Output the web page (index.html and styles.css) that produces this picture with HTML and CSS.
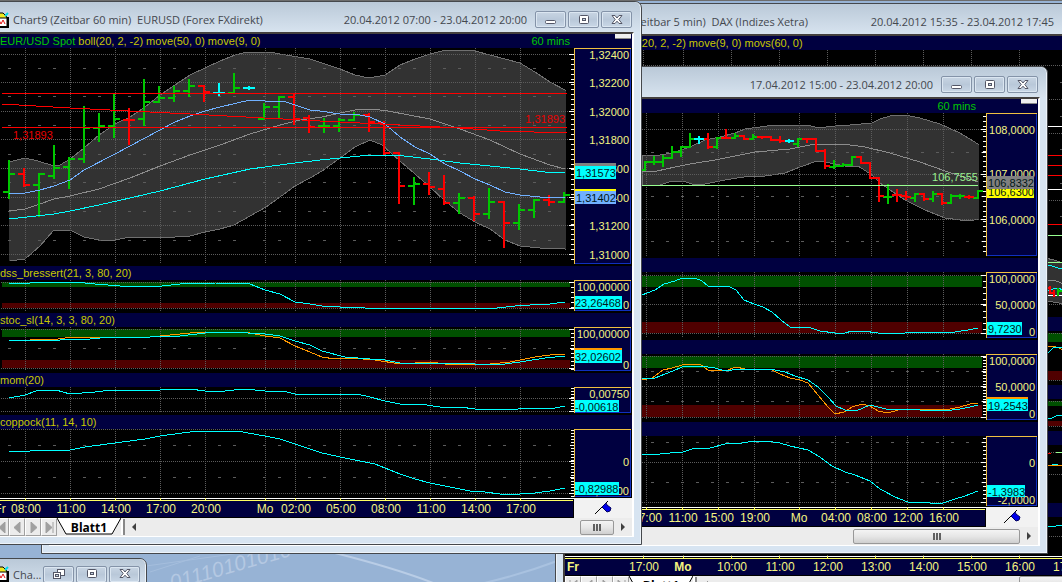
FILE: index.html
```html
<!DOCTYPE html>
<html lang="de">
<head>
    <meta charset="UTF-8">
    <meta name="viewport" content="width=device-width, initial-scale=1.0">
    <title>Charts</title>
    <link rel="stylesheet" href="styles.css">
</head>
<body>
    <!-- shared icons -->
    <svg class="defs" width="0" height="0">
        <symbol id="ico-min" viewBox="0 0 14 12"><rect x="1.5" y="6.5" width="10" height="3" rx="1" fill="#fff" stroke="#535666"/></symbol>
        <symbol id="ico-max" viewBox="0 0 14 12"><rect x="2.5" y="1.5" width="9" height="8" rx="1" fill="#fff" stroke="#535666"/><rect x="5.5" y="4.5" width="3" height="2" fill="#c5d3e2" stroke="#535666"/></symbol>
        <symbol id="ico-restore" viewBox="0 0 14 12"><rect x="5.5" y="1.5" width="7" height="6" fill="#fff" stroke="#535666"/><rect x="1.5" y="4.5" width="7" height="6" fill="#fff" stroke="#535666"/><rect x="3.5" y="6.5" width="3" height="2" fill="#c5d3e2" stroke="#535666"/></symbol>
        <symbol id="ico-close" viewBox="0 0 14 12"><path d="M2 1.500H5L7 4L9 1.500H12L8.800 5.500L12 9.500H9L7 7.200L5 9.500H2L5.200 5.500Z" fill="#fff" stroke="#535666"/></symbol>
        <symbol id="ico-pin" viewBox="0 0 20 16"><path d="M2 14L15 1" stroke="#000" fill="none"/><path d="M9 7L13 3L14 5L18 8L17 11L14 12L12 10Z" fill="#0000e8" stroke="#000060"/></symbol>
        <symbol id="ico-app" viewBox="0 0 16 16"><path d="M1 5H14V15H1Z" fill="#fff" stroke="#000"/><path d="M2 1H10L13 4L14 6H4Z" fill="#f0e820" stroke="#000"/><path d="M12 4L15 1" stroke="#00d8e8" stroke-width="2"/><path d="M3 11L6 8L8 12L10 8L12 12" stroke="#e01010" fill="none"/><path d="M1 15H15V5" stroke="#000" fill="none" stroke-width="2"/></symbol>
    </svg>

    <main class="desktop">
        <svg class="wallpaper" viewBox="0 545 640 37" width="640" height="37">
            <path d="M335 553Q410 572 450 590" stroke="#b9cde6" stroke-width="2" fill="none"/>
            <path d="M480 584Q520 575 560 560" stroke="#a9c2e0" stroke-width="2" fill="none"/>
            <path d="M146 566L240 553M150 572L200 556" stroke="#a5bedd" fill="none"/>
            <text x="172" y="590" transform="rotate(-16 172 590)">01110101010</text>
        </svg>

        <!-- DAX, 5 min -->
        <section class="window win-dax">
            <header class="titlebar">
                <h2 class="title">(Zeitbar 5 min)&nbsp; DAX (Indizes Xetra)</h2>
                <span class="range">20.04.2012 15:35 - 23.04.2012 17:45</span>
                <button class="ctl" aria-label="Minimieren"><svg width="14" height="12"><use href="#ico-min"/></svg></button>
                <button class="ctl" aria-label="Maximieren"><svg width="14" height="12"><use href="#ico-max"/></svg></button>
                <button class="ctl" aria-label="Schließen"><svg width="14" height="12"><use href="#ico-close"/></svg></button>
            </header>
            <div class="content">
                <div class="pane-head">boll(20, 2, -2) move(9, 0) movs(60, 0)</div>
                <svg class="plot" viewBox="565 50 600 267" width="600" height="267">
                    <path class="band" d="M1040 258Q1052 258 1064 264V304Q1050 301 1040 301Z"/>
                    <path class="grid" d="M643 50V317M683 50V317M731 50V317M779 50V317M827 50V317M875 50V317M923 50V317M971 50V317M1019 50V317M565 65H1165M565 99H1165M565 133H1165M565 200H1165M565 304H1165"/>
                    <path class="minor" d="M1060 82H1165M1060 116H1165M1060 149H1165M1060 183H1165M1060 216H1165"/>
                    <path class="white" d="M565 126H1165M565 189H1165M565 295H1165"/>
                    <path class="red" d="M565 155H1165M565 165H1165M565 175H1165M565 224H1165"/>
                    <path class="lime" d="M565 235H1165M565 262H1165"/>
                    <path class="cyan" d="M1040 265L1052 266L1058 268L1070 269M1048 291L1056 288L1065 290"/>
                    <path class="gray" d="M1048 280L1056 281L1064 284"/>
                    <path class="bar dn" d="M1048 288H1050V286V293H1054V297V290"/>
                    <path class="bar up" d="M1058 288V296V291H1064"/>
                </svg>
                <div class="pane-head"></div>
                <svg class="plot" viewBox="565 331 600 54" width="600" height="54">
                    <rect class="zone-hi" x="565" y="333" width="600" height="9"/>
                    <rect class="zone-lo" x="565" y="371" width="600" height="9"/>
                    <path class="grid" d="M565 333H1165M565 380H1165"/>
                    <path class="orange" d="M1040 350L1050 346L1056 347L1064 350"/>
                    <path class="cyan" d="M1040 358L1049 352L1053 348L1064 347"/>
                </svg>
                <div class="pane-head"></div>
                <svg class="plot" viewBox="565 399 600 32" width="600" height="32">
                    <rect class="zone-hi" x="565" y="401" width="600" height="5"/>
                    <rect class="zone-lo" x="565" y="421" width="600" height="5"/>
                    <path class="grid" d="M565 401H1165M565 426H1165"/>
                    <path class="cyan" d="M1040 420L1052 418L1056 416L1064 415"/>
                </svg>
                <div class="pane-head"></div>
                <svg class="plot" viewBox="565 445 600 58" width="600" height="58">
                    <path class="grid" d="M565 452H1165M565 474H1165"/>
                    <path class="red" d="M1046 453H1051"/>
                    <path class="lime" d="M1056 452H1065"/>
                    <path class="orange" d="M1040 465H1070"/>
                    <path class="cyan" d="M1052 464L1058 465"/>
                </svg>
                <div class="pane-head"></div>
                <svg class="plot" viewBox="565 517 600 39" width="600" height="39">
                    <path class="grid" d="M565 536H1165M643 545V556M683 545V556M731 545V556M779 545V556M827 545V556M875 545V556M923 545V556M971 545V556M1019 545V556"/>
                    <path class="cyan" d="M1040 526H1056L1070 525"/>
                </svg>
                <svg class="time" viewBox="565 556 600 20" width="600" height="20">
                    <path class="time-top" d="M565 556.500H1165"/>
                    <rect class="time-bg" x="565" y="559" width="600" height="16"/>
                    <path class="time-line" d="M565 558.500H1165M643.500 556V559M683.500 556V559M731.500 556V559M779.500 556V559M827.500 556V559M875.500 556V559M923.500 556V559M971.500 556V559M1019.500 556V559"/>
                    <g text-anchor="middle">
                        <text class="day" x="573" y="571">Fr</text><text x="644" y="571">17:00</text><text class="day" x="683" y="571">Mo</text><text x="732" y="571">10:00</text><text x="780" y="571">11:00</text><text x="828" y="571">12:00</text><text x="876" y="571">13:00</text><text x="924" y="571">14:00</text><text x="972" y="571">15:00</text><text x="1020" y="571">16:00</text><text x="1068" y="571">17:00</text>
                    </g>
                </svg>
                <div class="tabbar">
                    <div class="nav-buttons">
                        <button aria-label="Erstes Blatt"><svg width="9" height="11"><path d="M1 0V11M8 0L2 5.500L8 11Z"/></svg></button>
                        <button aria-label="Voriges Blatt"><svg width="9" height="11"><path d="M7 0L1 5.500L7 11Z"/></svg></button>
                        <button aria-label="Nächstes Blatt"><svg width="9" height="11"><path d="M2 0L8 5.500L2 11Z"/></svg></button>
                        <button aria-label="Letztes Blatt"><svg width="9" height="11"><path d="M1 0L7 5.500L1 11ZM8 0V11"/></svg></button>
                    </div>
                    <button class="tab"><svg class="tab-shape" viewBox="0 0 64 17" preserveAspectRatio="none"><path d="M0 0L9 16H55L64 0"/></svg><span>Blatt1</span></button>
                    <div class="scroll"><span class="grip"></span><button class="arrow left" aria-label="Links"></button></div>
                    <button class="thumb dax-thumb" aria-label="Bildlauf"></button>
                </div>
            </div>
        </section>

        <!-- second 60 min chart -->
        <section class="window win-yen">
            <header class="titlebar">
                <span class="range">17.04.2012 15:00 - 23.04.2012 20:00</span>
                <button class="ctl" aria-label="Minimieren"><svg width="14" height="12"><use href="#ico-min"/></svg></button>
                <button class="ctl" aria-label="Maximieren"><svg width="14" height="12"><use href="#ico-max"/></svg></button>
                <button class="ctl" aria-label="Schließen"><svg width="14" height="12"><use href="#ico-close"/></svg></button>
            </header>
            <div class="content">
                <div class="pane-head"><span class="mins">60 mins</span><span class="handle"></span></div>
                <div class="pane-body">
                    <svg class="plot" viewBox="49 113 937 143" width="937" height="143">
                        <path class="band" d="M642 155H660L672 153L690 147L705 140L720 137L735 133L745 129L760 127L775 125H808L818 128L835 126L850 125L872 123L880 119L890 116L905 115L920 118L940 124L960 133L978 144V219L970 221L960 220L945 218L925 210L905 200L890 190L880 183L872 175L858 166H845L830 163L817 161L800 167L785 173L765 176H750L725 180L705 184H692L683 181H672L660 185H642Z"/>
                        <path class="band-end" d="M978 145V219"/>
                        <path class="grid" d="M646 113V256M682 113V256M718 113V256M754 113V256M799 113V256M835 113V256M871 113V256M907 113V256M943 113V256M642 129H982M642 174H982M642 219H982"/>
                        <path class="minor even" d="M651 152H982M651 196H982M651 241H982"/>
                        <path class="gray" d="M642 171H657L675 167L690 164L715 160L755 152L790 149L810 145L825 144L850 145L865 147L890 153L920 162L945 171L978 182"/>
                        <path class="bar up" d="M642 170H645V162H654V156V165V162H663V155V167V158H672V146V158V152H681V157V146V147H690V133V148V139H695M712 147H717V149V137V138H722M730 138H735V133V138V136H740M748 139H753V134V140V137H758M793 144H798V147V138V139H803M829 167H834V160V169V166H843V163V167V165H852V156V157H857M883 197H888V184V204V197H892M910 198H915V202V194H920M928 199H933V202V191V194H937M946 203H951V204V194V196H960V194V199V196H965M973 198H978V199V190V191H983"/>
                        <path class="bar dn" d="M704 139H708V133V149V147H713M721 138H726V129V139V138H731M739 136H744V135V140V139H749M757 137H762V136V139V137H771V136V141V140H780V136V143V141H785M802 139H807V138V143V139H816V152V151H825V149V169V166H830M856 157H861V164V163H870V162V179V178H879V177V202V196H884M892 195H897V189V202V195H902M901 196H906V191V200V197H911M919 194H924V193V201V199H929M937 194H942V205V203H947M964 197H969V195V199V197H974"/>
                        <path class="bar eq" d="M694 139H704M699 136V144M785 141H794M789 139V143"/>
                        <path class="lime" d="M642 185H978"/>
                        <text class="t-lime" x="978" y="181" text-anchor="end">106,7555</text>
                        <path class="tick" d="M981 129H986M981 174H986M981 219H986M982 152H986M982 196H986M982 241H986"/>
                        <path class="ruler five" d="M984.500 116V256"/>
                    </svg>
                    <svg class="axis" viewBox="986 113 51 143" width="51" height="143">
                        <g text-anchor="end"><text x="1035" y="134">108,0000</text><text x="1035" y="178">107,0000</text><text x="1035" y="224">106,0000</text></g>
                        <rect class="b-yellow" x="987" y="186" width="47" height="12"/><text class="dark" x="1034" y="196" text-anchor="end">106,6300</text>
                        <rect class="b-gray" x="987" y="176" width="47" height="13"/><text class="dark" x="1034" y="187" text-anchor="end">106,8332</text>
                    </svg>
                </div>
                <div class="pane-head"></div>
                <div class="pane-body">
                    <svg class="plot" viewBox="49 272 937 66" width="937" height="66">
                        <rect class="zone-hi" x="51" y="276" width="931" height="11"/>
                        <rect class="zone-lo" x="51" y="322" width="931" height="11"/>
                        <path class="grid" d="M646 272V338M682 272V338M718 272V338M754 272V338M799 272V338M835 272V338M871 272V338M907 272V338M943 272V338M642 275H982M642 304H982M642 333H982"/>
                        <path class="cyan" d="M642 295L655 290L664 284L675 281L682 278H695L702 281L708 286H728L736 290L744 300L754 304L763 307L772 312L781 320L790 327H808L820 331L835 333H845L852 331H863L878 333H905L920 332L945 333L955 332L968 330L978 328"/>
                        <path class="tick" d="M981 275H986M981 304H986M981 333H986"/>
                        <path class="ruler six" d="M984.500 275V334"/>
                    </svg>
                    <svg class="axis" viewBox="986 272 51 66" width="51" height="66">
                        <g text-anchor="end"><text x="1035" y="283">100,0000</text><text x="1035" y="309">50,0000</text><text x="1035" y="336">0</text></g>
                        <rect class="b-cyan" x="987" y="322" width="35" height="13"/><text class="dark" x="988" y="333">9,7230</text>
                    </svg>
                </div>
                <div class="pane-head"></div>
                <div class="pane-body">
                    <svg class="plot" viewBox="49 354 937 66" width="937" height="66">
                        <rect class="zone-hi" x="51" y="356" width="931" height="12"/>
                        <rect class="zone-lo" x="51" y="405" width="931" height="12"/>
                        <path class="grid" d="M646 354V420M682 354V420M718 354V420M754 354V420M799 354V420M835 354V420M871 354V420M907 354V420M943 354V420M642 356H982M642 386H982M642 417H982"/>
                        <path class="minor even" d="M651 371H982M651 401H982"/>
                        <path class="orange" d="M642 380L652 378L663 370L672 368L682 365L700 364L708 370L725 371L736 367L745 369L772 370L780 374L790 378L800 380L808 383L818 395L828 407L835 414L844 412L852 407L862 404L870 406L878 411L888 413L898 410L925 409L945 410L960 407L970 404L978 403"/>
                        <path class="cyan" d="M642 378H655L665 374L673 371L682 367L700 366L715 368L725 371L740 369H770L785 372L795 376L808 380L818 387L828 397L836 406L845 410L856 411L863 408L870 405L878 407L890 410L910 409L920 410L945 411L960 409L970 407L978 405"/>
                        <path class="tick" d="M981 356H986M981 386H986M981 417H986M982 371H986M982 401H986"/>
                        <path class="ruler three" d="M984.500 357V418"/>
                    </svg>
                    <svg class="axis" viewBox="986 354 51 66" width="51" height="66">
                        <g text-anchor="end"><text x="1035" y="365">100,0000</text><text x="1035" y="391">50,0000</text><text x="1035" y="418">0</text></g>
                        <rect class="b-orange" x="987" y="397" width="41" height="3"/>
                        <rect class="b-cyan" x="987" y="399" width="41" height="12"/><text class="dark" x="988" y="410">19,2543</text>
                    </svg>
                </div>
                <div class="pane-head"></div>
                <div class="pane-body last">
                    <svg class="plot" viewBox="49 436 937 70" width="937" height="70">
                        <path class="grid" d="M646 436V506M682 436V506M718 436V506M754 436V506M799 436V506M835 436V506M871 436V506M907 436V506M943 436V506M642 462H982M642 502H982"/>
                        <path class="minor even" d="M651 442H982M651 482H982"/>
                        <path class="cyan" d="M642 454H660L670 453L683 452L695 448H710L725 444L742 443L755 441H765L780 443L790 446L808 450L820 457L832 466L845 472L855 475L870 481L880 489L895 497L908 502L930 503H943L955 499L965 496L978 491"/>
                        <path class="tick" d="M981 462H986M981 502H986M982 442H986M982 482H986"/>
                        <path class="ruler four" d="M984.500 438V506"/>
                    </svg>
                    <svg class="axis" viewBox="986 436 51 70" width="51" height="70">
                        <g text-anchor="end"><text x="1035" y="467">0</text><text x="1035" y="504">-2,0000</text></g>
                        <rect class="b-cyan" x="987" y="485" width="38" height="12"/><text class="dark" x="988" y="496">-1,3983</text>
                    </svg>
                </div>
                <div class="time-row">
                    <svg class="time" viewBox="49 507 937 20" width="937" height="20">
                        <path class="time-top" d="M49 507.500H986"/>
                        <rect class="time-bg" x="49" y="510" width="936" height="16"/>
                        <path class="time-line" d="M49 509.500H985M646.500 507V510M682.500 507V510M718.500 507V510M754.500 507V510M799.500 507V510M835.500 507V510M871.500 507V510M907.500 507V510M943.500 507V510"/>
                        <g text-anchor="middle">
                            <text x="647" y="522">07:00</text><text x="683" y="522">11:00</text><text x="719" y="522">15:00</text><text x="755" y="522">19:00</text><text x="799" y="522">Mo</text><text x="836" y="522">04:00</text><text x="872" y="522">08:00</text><text x="908" y="522">12:00</text><text x="944" y="522">16:00</text>
                        </g>
                    </svg>
                    <div class="pin"><svg width="20" height="16"><use href="#ico-pin"/></svg></div>
                </div>
                <div class="tabbar">
                    <div class="scroll end"><button class="thumb wide" aria-label="Bildlauf"><i></i></button><button class="arrow right" aria-label="Rechts"></button></div>
                </div>
            </div>
        </section>

        <!-- EURUSD, 60 min -->
        <section class="window win-eur">
            <header class="titlebar">
                <svg class="app-icon" width="16" height="16"><use href="#ico-app"/></svg>
                <h2 class="title">Chart9 (Zeitbar 60 min)&nbsp; EURUSD (Forex FXdirekt)</h2>
                <span class="range">20.04.2012 07:00 - 23.04.2012 20:00</span>
                <button class="ctl" aria-label="Minimieren"><svg width="14" height="12"><use href="#ico-min"/></svg></button>
                <button class="ctl" aria-label="Maximieren"><svg width="14" height="12"><use href="#ico-max"/></svg></button>
                <button class="ctl" aria-label="Schließen"><svg width="14" height="12"><use href="#ico-close"/></svg></button>
            </header>
            <div class="content">
                <div class="pane-head"><span><b>EUR/USD Spot</b> boll(20, 2, -2) move(50, 0) move(9, 0)</span><span class="mins">60 mins</span><span class="handle"></span></div>
                <div class="pane-body">
                    <svg class="plot" viewBox="0 48 574 216" width="574" height="216">
                        <path class="band" d="M9 162L17 160L25 158L38 161L54 166L60 165L70 159L84 148L99 135L115 124L130 117L145 107L160 95L175 85L190 75L205 68L220 61L235 55L247 52H270L280 54L292 56L310 59L322 63L340 69L355 75L369 78L385 75L400 65L415 59L430 54L442 51L462 50L475 51L490 55L505 59L520 63L535 72L550 82L565 90V249L540 248L520 246L505 240L490 229L475 222L460 213L445 201L430 187L415 174L400 161L382 145L370 140L355 147L340 158L322 171L310 178L295 186L280 197L266 207L250 216L234 225L220 229L205 232L190 236L175 237H160L145 238L130 237L115 240H99L84 237L70 230H54L40 246L25 259L9 261Z"/>
                        <path class="band-end" d="M9 163V261M565 91V249"/>
                        <path class="grid" d="M25 48V264M70 48V264M115 48V264M160 48V264M205 48V264M265 48V264M295 48V264M340 48V264M385 48V264M430 48V264M475 48V264M520 48V264M1 54H570M1 82H570M1 111H570M1 139H570M1 168H570M1 197H570M1 225H570M1 254H570"/>
                        <path class="minor" d="M-7 68H570M-7 96H570M-7 125H570M-7 154H570M-7 182H570M-7 211H570M-7 240H570"/>
                        <path class="gray" d="M9 211L25 209L40 204L54 199L70 196L99 189L130 178L160 166L190 155L220 145L250 134L280 125L300 120L322 117L340 113L355 110L372 109L388 111L430 119L460 129L490 140L520 154L550 165L565 169"/>
                        <path class="bar up" d="M3 192H9V199V160V174H15M33 185H39V217V174H45M48 176H54V179V145V168H60M63 167H69V189V157V159H75M78 159H84V163V106V128H90M93 128H99V142V113V126H105M108 126H114V138V94V119H120M138 119H144V126V79V102H150M153 102H159V103V86V98H165M168 98H174V102V86V91H180M183 91H189V97V79V86H195M228 93H234V73V88H240M258 119H264V120V103V107H270M273 107H279V118V96V97H285M318 126H324V133V118V126H330M333 126H339V132V118V120H345M348 120H354V121V112V115H360M408 186H414V205V177V184H420M453 203H459V214V193V198H465M483 214H489V219V188V202H495M513 223H519V230V204V210H525M528 210H534V218V199V200H540M558 202H564V203V192V195H570"/>
                        <path class="bar dn" d="M18 174H24V168V187V185H30M123 120H129V108V145V120H135M198 86H204V102V92H210M288 97H294V93V125V119H300M303 118H309V115V133V127H315M363 115H369V113V132V122H375M378 123H384V121V155V153H390M393 153H399V204V186H405M423 184H429V172V195V187H435M438 189H444V175V205V203H450M468 198H474V196V221V214H480M498 202H504V248V223H510M543 200H549V195V206V202H555"/>
                        <path class="bar eq" d="M213 93H225M219 83V96M243 88H255M249 86V90"/>
                        <path class="cyan" d="M9 219L54 214L70 211L99 205L130 198L160 191L205 179L250 169L295 163L320 160L350 157L370 155H395L430 159L460 163L490 166L520 169L545 172H565"/>
                        <path class="blue" d="M9 194L25 193L40 190L54 186L70 180L84 170L115 154L145 138L175 122L190 116L205 111L220 107L250 100L265 101H283L295 105L310 110L320 111L340 114L360 115L370 117L385 124L400 137L415 147L430 154L445 164L460 171L475 179L490 185L505 192L520 195L540 197H565"/>
                        <path class="red" d="M2 93H567M2 127H567M2 104L70 108L130 111L190 114L320 121L400 125L460 128L500 131L567 133"/>
                        <text class="t-red" x="13" y="139">1,31893</text>
                        <text class="t-red" x="565" y="123" text-anchor="end">1,31893</text>
                        <path class="tick" d="M569 54H574M569 82H574M569 111H574M569 139H574M569 168H574M569 197H574M569 225H574M569 254H574"/>
                        <path class="ruler five" d="M572.500 54V262"/>
                    </svg>
                    <svg class="axis" viewBox="574 48 57 216" width="57" height="216">
                        <g text-anchor="end"><text x="629" y="59">1,32400</text><text x="629" y="87">1,32200</text><text x="629" y="116">1,32000</text><text x="629" y="144">1,31800</text><text x="629" y="173">1,31600</text><text x="629" y="202">1,31400</text><text x="629" y="230">1,31200</text><text x="629" y="259">1,31000</text></g>
                        <rect class="b-gray" x="575" y="163" width="41" height="3"/>
                        <rect class="b-cyan" x="575" y="166" width="41" height="13"/><text class="dark" x="576" y="177">1,31573</text>
                        <rect class="b-yellow" x="575" y="189" width="41" height="2"/>
                        <rect class="b-blue" x="575" y="191" width="41" height="13"/><text class="dark" x="576" y="202">1,31402</text>
                    </svg>
                </div>
                <div class="pane-head">dss_bressert(21, 3, 80, 20)</div>
                <div class="pane-body">
                    <svg class="plot" viewBox="0 280 574 31" width="574" height="31">
                        <rect class="zone-hi" x="2" y="282" width="568" height="5"/>
                        <rect class="zone-lo" x="2" y="303" width="568" height="5"/>
                        <path class="grid" d="M25 280V311M70 280V311M115 280V311M160 280V311M205 280V311M265 280V311M295 280V311M340 280V311M385 280V311M430 280V311M475 280V311M520 280V311M1 282H570M1 308H570"/>
                        <path class="cyan" d="M9 283H30L40 282H75L95 284L120 286H162L180 284L190 283H215L250 284L265 290L280 294L295 302L310 304L322 306L340 307L365 308H497L515 306L530 305L550 304L565 302"/>
                        <path class="tick" d="M569 282H574M569 308H574"/>
                        <path class="ruler five" d="M572.500 282V310"/>
                    </svg>
                    <svg class="axis" viewBox="574 280 57 31" width="57" height="31">
                        <g text-anchor="end"><text x="629" y="291">100,00000</text><text x="629" y="309">0</text></g>
                        <rect class="b-cyan" x="575" y="296" width="47" height="13"/><text class="dark" x="575" y="307">23,26468</text>
                    </svg>
                </div>
                <div class="pane-head">stoc_sl(14, 3, 3, 80, 20)</div>
                <div class="pane-body">
                    <svg class="plot" viewBox="0 327 574 44" width="574" height="44">
                        <rect class="zone-hi" x="2" y="329" width="568" height="8"/>
                        <rect class="zone-lo" x="2" y="360" width="568" height="8"/>
                        <path class="grid" d="M25 327V371M70 327V371M115 327V371M160 327V371M205 327V371M265 327V371M295 327V371M340 327V371M385 327V371M430 327V371M475 327V371M520 327V371M1 329H570M1 368H570"/>
                        <path class="minor" d="M-7 348H570"/>
                        <path class="orange" d="M30 339H58L65 338L105 337H150L160 336L180 334L200 332H215L250 333L265 336L280 338L295 346L310 352L322 357L335 359L350 358L375 360L400 364L430 362L445 364L480 365L510 362L535 357L550 355L565 354"/>
                        <path class="cyan" d="M9 340H60L90 339L110 337H150L180 336L205 333L230 332L265 334L280 336L295 341L310 345L322 351L345 357L370 359L385 360L400 363H465L475 364H505L520 362L545 358L565 356"/>
                        <path class="tick" d="M569 329H574M569 368H574M570 348H574"/>
                        <path class="ruler four" d="M572.500 329V370"/>
                    </svg>
                    <svg class="axis" viewBox="574 327 57 44" width="57" height="44">
                        <g text-anchor="end"><text x="629" y="338">100,00000</text><text x="629" y="369">0</text></g>
                        <rect class="b-orange" x="575" y="348" width="47" height="2"/>
                        <rect class="b-cyan" x="575" y="350" width="47" height="13"/><text class="dark" x="575" y="361">32,02602</text>
                    </svg>
                </div>
                <div class="pane-head">mom(20)</div>
                <div class="pane-body">
                    <svg class="plot" viewBox="0 387 574 26" width="574" height="26">
                        <path class="grid" d="M25 387V413M70 387V413M115 387V413M160 387V413M205 387V413M265 387V413M295 387V413M340 387V413M385 387V413M430 387V413M475 387V413M520 387V413M1 398H570M1 411H570"/>
                        <path class="cyan" d="M9 398L25 395L36 391L45 390H56L70 394L95 392L112 390H160L175 389H190L205 391H225L243 389L255 390L265 391H283L295 394L305 395L322 394H357L370 397L385 401L400 404H420L440 407H460L475 409H490L507 410L530 408L550 409L565 406"/>
                        <path class="tick" d="M569 398H574M569 411H574"/>
                        <path class="ruler three" d="M572.500 388V412"/>
                    </svg>
                    <svg class="axis" viewBox="574 387 57 26" width="57" height="26">
                        <text x="629" y="398" text-anchor="end">0,00750</text>
                        <rect class="b-cyan" x="575" y="400" width="44" height="12"/><text class="dark" x="575" y="411">-0,00618</text>
                    </svg>
                </div>
                <div class="pane-head">coppock(11, 14, 10)</div>
                <div class="pane-body last">
                    <svg class="plot" viewBox="0 429 574 68" width="574" height="68">
                        <path class="grid" d="M25 429V497M70 429V497M115 429V497M160 429V497M205 429V497M265 429V497M295 429V497M340 429V497M385 429V497M430 429V497M475 429V497M520 429V497M1 429H570M1 461H570M1 493H570"/>
                        <path class="minor" d="M-7 445H570M-7 477H570"/>
                        <path class="cyan" d="M9 451H30L40 450H70L85 447L115 443L145 439L160 436L190 432L203 431H237L265 436L280 439L295 444L322 453L345 458L375 464L385 468L400 474L415 479L430 483L450 487L470 491L485 492L500 494H520L535 493L550 491L565 488"/>
                        <path class="tick" d="M569 461H574M569 493H574M570 445H574M570 477H574"/>
                        <path class="ruler three" d="M572.500 430V497"/>
                    </svg>
                    <svg class="axis" viewBox="574 429 57 68" width="57" height="68">
                        <g text-anchor="end"><text x="629" y="466">0</text><text x="629" y="495">-1,00000</text></g>
                        <rect class="b-cyan" x="575" y="482" width="44" height="13"/><text class="dark" x="575" y="493">-0,82988</text>
                    </svg>
                </div>
                <div class="time-row">
                    <svg class="time" viewBox="0 498 574 20" width="574" height="20">
                        <path class="time-top" d="M0 498.500H574"/>
                        <rect class="time-bg" x="0" y="501" width="573" height="16"/>
                        <path class="time-line" d="M0 500.500H573M25.500 498V501M70.500 498V501M115.500 498V501M160.500 498V501M205.500 498V501M265.500 498V501M295.500 498V501M340.500 498V501M385.500 498V501M430.500 498V501M475.500 498V501M520.500 498V501"/>
                        <g text-anchor="middle">
                            <text x="0" y="513">Fr</text><text x="26" y="513">08:00</text><text x="71" y="513">11:00</text><text x="116" y="513">14:00</text><text x="161" y="513">17:00</text><text x="206" y="513">20:00</text><text x="265" y="513">Mo</text><text x="296" y="513">02:00</text><text x="341" y="513">05:00</text><text x="386" y="513">08:00</text><text x="431" y="513">11:00</text><text x="476" y="513">14:00</text><text x="521" y="513">17:00</text>
                        </g>
                    </svg>
                    <div class="pin"><svg width="20" height="16"><use href="#ico-pin"/></svg></div>
                </div>
                <div class="tabbar">
                    <div class="nav-buttons cut">
                        <button aria-label="Erstes Blatt"><svg width="9" height="11"><path d="M1 0V11M8 0L2 5.500L8 11Z"/></svg></button>
                        <button aria-label="Voriges Blatt"><svg width="9" height="11"><path d="M7 0L1 5.500L7 11Z"/></svg></button>
                        <button aria-label="Nächstes Blatt"><svg width="9" height="11"><path d="M2 0L8 5.500L2 11Z"/></svg></button>
                        <button aria-label="Letztes Blatt"><svg width="9" height="11"><path d="M1 0L7 5.500L1 11ZM8 0V11"/></svg></button>
                    </div>
                    <button class="tab"><svg class="tab-shape" viewBox="0 0 64 17" preserveAspectRatio="none"><path d="M0 0L9 16H55L64 0"/></svg><span>Blatt1</span></button>
                    <div class="scroll"><span class="grip"></span><button class="arrow left" aria-label="Links"></button><span class="fill"></span><button class="thumb" aria-label="Bildlauf"><i></i></button><button class="arrow right" aria-label="Rechts"></button></div>
                </div>
            </div>
        </section>

        <!-- minimised chart -->
        <section class="window win-min">
            <header class="titlebar">
                <svg class="app-icon" width="16" height="16"><use href="#ico-app"/></svg>
                <h2 class="title">Cha...</h2>
                <button class="ctl" aria-label="Wiederherstellen"><svg width="14" height="12"><use href="#ico-restore"/></svg></button>
                <button class="ctl" aria-label="Maximieren"><svg width="14" height="12"><use href="#ico-max"/></svg></button>
                <button class="ctl" aria-label="Schließen"><svg width="14" height="12"><use href="#ico-close"/></svg></button>
            </header>
        </section>
    </main>
</body>
</html>
```
FILE: styles.css
```css
* {
    box-sizing: border-box;
}

body {
    margin: 0;
    font-family: 'Liberation Sans', sans-serif;
    font-size: 11px;
}

svg {
    display: block;
    flex-shrink: 0;
}

button {
    padding: 0;
    margin: 0;
    border: none;
    background: none;
    font: inherit;
}

.defs {
    position: absolute;
}

.desktop {
    position: relative;
    height: 100vh;
    overflow: hidden;
    background: #97b3d5;
    border-top: 1px solid #6d6d6d;
}

.wallpaper {
    position: absolute;
    left: 0;
    bottom: 0;
}

.wallpaper text {
    font: italic 21px 'Liberation Sans', sans-serif;
    fill: #b4c8e2;
}

/* windows */
.window {
    position: absolute;
    padding: 0 7px 7px;
    border: 1px solid #45484c;
    border-radius: 7px 7px 0 0;
    background: #d7e4f1;
    box-shadow: inset 0 0 0 1px #edf3f9;
}

.win-dax {
    left: 555px;
    right: -107px;
    top: 2px;
}

.win-yen {
    left: 41px;
    width: 1007px;
    top: 65px;
}

.win-eur {
    left: -8px;
    width: 650px;
    top: 0;
}

.win-min {
    left: -8px;
    width: 155px;
    top: 557px;
    height: 60px;
    background: #c9d6e4;
}

.titlebar {
    display: flex;
    align-items: center;
    gap: 2px;
    height: 30px;
    padding: 5px 8px 0 6px;
    margin: 0 -6px;
    border-radius: 6px 6px 0 0;
    background: linear-gradient(#bac9d8, #d7e3ef);
    color: #44484f;
    font: 11px 'Open Sans', sans-serif;
}

.title {
    margin: 0;
    font: inherit;
    white-space: nowrap;
}

.range {
    margin-left: auto;
    margin-right: 6px;
    white-space: nowrap;
}

.win-dax .title {
    padding-left: 68px;
}

.win-min .ctl:nth-of-type(1) {
    margin-left: auto;
}

.win-min .titlebar {
    padding: 0 5px 0 6px;
}

.app-icon {
    margin-left: -7px;
    margin-right: 2px;
}

.ctl {
    display: flex;
    align-items: center;
    justify-content: center;
    width: 31px;
    height: 17px;
    border: 1px solid #8493a8;
    border-radius: 2px;
    background: linear-gradient(#c8d5e3, #b9c8d9 50%, #c9d7e6);
    box-shadow: inset 0 0 0 1px #dbe6f1;
}

.content {
    overflow: hidden;
    background: #000;
    border-top: 2px solid #44403e;
    border-right: 2px solid #fff;
    border-bottom: 1px solid #fff;
}

.win-dax .content {
    border-left: 2px solid #44403e;
}

/* chart panes */
.pane-head {
    display: flex;
    height: 14px;
    line-height: 14px;
    background: #000040;
    color: #c8c800;
    white-space: pre;
}

.pane-head b {
    font-weight: normal;
    color: #00c800;
}

.win-dax .pane-head {
    padding-left: 56px;
}

.mins {
    margin-left: auto;
    margin-right: 45px;
    color: #00c800;
}

.handle {
    width: 16px;
    height: 5px;
    margin-right: 1px;
    border-bottom: 1px solid #888;
    background: #f0f0f0;
}

.pane-body {
    display: flex;
    margin-bottom: 2px;
}

.last {
    margin-bottom: 1px;
}

.plot path {
    fill: none;
    stroke-width: 1;
    shape-rendering: crispEdges;
}

.plot .band {
    fill: #323232;
    stroke: #707070;
}

.plot .band-end {
    stroke: #323232;
}

.plot .grid {
    stroke: #5c5c5c;
    stroke-dasharray: 1 1;
}

.plot .minor {
    stroke: #5c5c5c;
    stroke-dasharray: 3 12 3 27;
}

.plot .even {
    stroke-dasharray: 3 12;
}

.plot .gray { stroke: #8c8c8c; }
.plot .cyan { stroke: #00ffff; }
.plot .blue { stroke: #70b0ff; }
.plot .red { stroke: #ff0000; }
.plot .orange { stroke: #ff9800; }
.plot .lime { stroke: #98ff90; }
.plot .white { stroke: #fff; }

.plot .bar { stroke-width: 2; }
.plot .up { stroke: #00c800; }
.plot .dn { stroke: #ff0000; }
.plot .eq { stroke: #00ffff; }

.plot .tick { stroke: #fff; }

.plot .ruler {
    stroke: #fff;
    stroke-width: 3;
}

.plot .three { stroke-dasharray: 1 2; }
.plot .four { stroke-dasharray: 1 3; }
.plot .five { stroke-dasharray: 1 4; }
.plot .six { stroke-dasharray: 1 5; }

.zone-hi { fill: #005000; }
.zone-lo { fill: #500000; }

.t-red { fill: #e80000; }
.t-lime { fill: #98f090; }

.axis {
    background: #000040;
    box-shadow: inset 1px 1px #f0c040, inset -1px -1px #1030c0;
    fill: #f4f480;
}

.axis .dark { fill: #001818; }
.b-cyan { fill: #00ffff; }
.b-gray { fill: #808080; }
.b-yellow { fill: #ffff00; }
.b-blue { fill: #70b0ff; }
.b-orange { fill: #ff9800; }

/* time axis */
.time-row {
    display: flex;
}

.time {
    font-size: 12px;
    fill: #f4f480;
}

.time-bg { fill: #000040; }
.time-top { stroke: #fff; }
.time-line { stroke: #ffff60; }
.day { font-weight: bold; }

.pin {
    flex: 1;
    display: flex;
    align-items: center;
    justify-content: center;
    background: #f2f2f2;
}

/* sheet tabs and scroll bar */
.tabbar {
    display: flex;
    height: 18px;
    background: #ececec;
}

.nav-buttons {
    display: flex;
}

.cut {
    margin-left: -7px;
}

.nav-buttons button {
    display: flex;
    align-items: center;
    justify-content: center;
    width: 16px;
    border: 1px solid #fff;
    border-right-color: #a0a0a0;
    border-bottom-color: #a0a0a0;
}

.nav-buttons path {
    fill: #a0a0a0;
    stroke: #a0a0a0;
}

.tab {
    position: relative;
    width: 64px;
    font: bold 12px 'Open Sans', sans-serif;
    line-height: 15px;
    color: #000;
}

.tab-shape {
    position: absolute;
    left: 0;
    top: 0;
    width: 100%;
    height: 17px;
}

.tab-shape path {
    fill: #fff;
    stroke: #000;
}

.tab span {
    position: relative;
}

.scroll {
    display: flex;
    flex: 1;
    align-items: center;
}

.grip {
    width: 4px;
    height: 16px;
    border-right: 2px solid #888;
    background: #fff;
}

.fill {
    flex: 1;
}

.end {
    justify-content: flex-end;
}

.arrow {
    width: 18px;
    height: 16px;
    display: flex;
    align-items: center;
    justify-content: center;
}

.arrow::before {
    content: "";
    border: 4px solid transparent;
}

.left::before {
    border-right-color: #404040;
    border-left-width: 0;
}

.right::before {
    border-left-color: #404040;
    border-right-width: 0;
}

.thumb {
    display: flex;
    align-items: center;
    justify-content: center;
    width: 34px;
    height: 15px;
    border: 1px solid #989898;
    border-radius: 2px;
    background: linear-gradient(#f4f4f4, #e6e6e6 50%, #cfcfcf);
}

.thumb i {
    width: 8px;
    height: 7px;
    background: repeating-linear-gradient(90deg, #606060 0 2px, transparent 2px 3px);
}

.wide {
    width: 167px;
}

.dax-thumb {
    width: 140px;
}
```
